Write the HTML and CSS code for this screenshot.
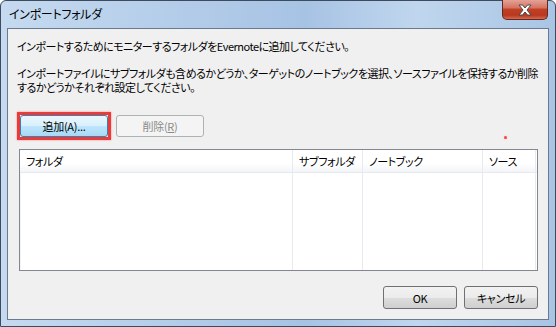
FILE: index.html
```html
<!DOCTYPE html>
<html lang="ja">
<head>
    <meta charset="UTF-8">
    <title>インポートフォルダ</title>
    <link rel="stylesheet" href="styles.css">
</head>
<body>
    <div class="window">
        <div class="titlebar">
            <span class="title">インポートフォルダ</span>
            <button class="close-btn" aria-label="閉じる">
                <svg width="16" height="12" viewBox="0 0 16 12">
                    <path d="M2 1 H5.5 L8 4 L10.5 1 H14 L10 6 L14 11 H10.5 L8 8 L5.5 11 H2 L6 6 Z" fill="#fff" stroke="#4a4a4a" stroke-width="1" stroke-linejoin="round"/>
                </svg>
            </button>
        </div>

        <div class="client">
            <p class="intro">インポートするためにモニターするフォルダをEvernoteに追加してください。</p>
            <p class="intro">インポートファイルにサブフォルダも含めるかどうか、ターゲットのノートブックを選択、ソースファイルを保持するか削除<br>するかどうかそれぞれ設定してください。</p>

            <div class="toolbar">
                <span class="highlight">
                    <button class="btn btn-default">追加(A)...</button>
                </span>
                <button class="btn" disabled>削除(<u>R</u>)</button>
            </div>

            <div class="listview">
                <div class="list-row list-header">
                    <div class="col col-folder">フォルダ</div>
                    <div class="col col-sub">サブフォルダ</div>
                    <div class="col col-book">ノートブック</div>
                    <div class="col col-src">ソース</div>
                </div>
                <div class="list-row list-body">
                    <div class="col col-folder"></div>
                    <div class="col col-sub"></div>
                    <div class="col col-book"></div>
                    <div class="col col-src"></div>
                </div>
            </div>

            <div class="footer">
                <button class="btn btn-wide">OK</button>
                <button class="btn btn-wide">キャンセル</button>
            </div>
        </div>

        <span class="dot"></span>
    </div>
</body>
</html>
```

FILE: styles.css
```css
body {
    margin: 0;
    font-family: "Noto Sans CJK JP", "Noto Sans", sans-serif;
    font-size: 11px;
    color: #000;
    background: #fff;
}
.window {
    position: relative;
    width: 556px;
    height: 327px;
    box-sizing: border-box;
    border: 1px solid #3c4c5e;
    border-radius: 6px 6px 0 0;
    padding: 0 6px 6px 6px;
    background: linear-gradient(90deg, #c5daf0 0%, #b4cde9 30%, #a7c3e4 55%, #c0d6ee 75%, #a9c5e4 100%);
    display: flex;
    flex-direction: column;
}
.titlebar {
    height: 27px;
    display: flex;
    align-items: flex-start;
    justify-content: space-between;
}
.title {
    margin-top: 5px;
    margin-left: 2px;
    font-size: 12px;
    line-height: 16px;
    font-feature-settings: "palt";
    letter-spacing: -0.3px;
}
.close-btn {
    width: 46px;
    height: 20px;
    margin-right: 1px;
    margin-top: -1px;
    padding: 0;
    border: 1px solid #5e2a22;
    border-top: none;
    border-radius: 0 0 5px 5px;
    background: linear-gradient(#e3a296 0%, #d57563 40%, #c23e24 50%, #b9381e 80%, #d46a4f 100%);
    display: flex;
    align-items: center;
    justify-content: center;
}
.client {
    flex: 1;
    border: 1px solid #6a7a8c;
    background: #f0f0f0;
    padding: 0 10px 0 9px;
    display: flex;
    flex-direction: column;
}
.intro {
    margin: 11px 0 0 0;
    line-height: 13px;
    white-space: nowrap;
    font-feature-settings: "palt";
    letter-spacing: -0.5px;
}
.intro + .intro {
    margin-top: 13px;
    line-height: 14px;
}
.toolbar {
    margin-top: 18px;
    display: flex;
    align-items: center;
    gap: 5px;
}
.highlight {
    display: flex;
    padding: 0;
    border: 3px solid #ea3b3b;
    box-shadow: 0 0 2px #f08a8a;
}
.btn {
    font-family: inherit;
    font-size: 11px;
    height: 22px;
    width: 88px;
    padding: 0;
    border: 1px solid #707070;
    border-radius: 3px;
    background: linear-gradient(#f2f2f2 0%, #ebebeb 50%, #dddddd 51%, #cfcfcf 100%);
    color: #000;
    font-feature-settings: "palt";
    letter-spacing: -0.3px;
}
.btn-default {
    border-color: #3c7fb1;
    background: linear-gradient(#eaf6fd 0%, #d9f0fc 50%, #bee6fd 51%, #a7d9f5 100%);
}
.btn:disabled {
    border-color: #adb2b5;
    background: #f4f4f4;
    color: #8a8a8a;
}
.listview {
    margin: 9px 0 0 2px;
    height: 122px;
    box-sizing: border-box;
    border: 1px solid #828790;
    background: #fff;
    display: flex;
    flex-direction: column;
}
.list-row {
    display: flex;
}
.list-header {
    height: 22px;
    background: linear-gradient(#ffffff 0%, #ffffff 60%, #f3f5f8 100%);
    border-bottom: 1px solid #e5e8ec;
}
.list-body {
    flex: 1;
}
.col {
    box-sizing: border-box;
    border-right: 1px solid #e7eaee;
    padding-left: 6px;
    line-height: 22px;
    white-space: nowrap;
    overflow: hidden;
    font-feature-settings: "palt";
    letter-spacing: -0.4px;
}
.col-folder { width: 273px; }
.col-sub { width: 70px; }
.col-book { width: 120px; }
.col-src { width: 53px; }
.list-body .col-folder { border-left: 1px solid #f1f3f6; }
.footer {
    margin-top: 15px;
    display: flex;
    justify-content: flex-end;
    gap: 7px;
}
.btn-wide {
    width: 74px;
    height: 23px;
}
.dot {
    position: absolute;
    left: 503px;
    top: 135px;
    width: 3px;
    height: 3px;
    border-radius: 50%;
    background: #ff4a4a;
    box-shadow: 0 0 1px #ff8080;
}
```
